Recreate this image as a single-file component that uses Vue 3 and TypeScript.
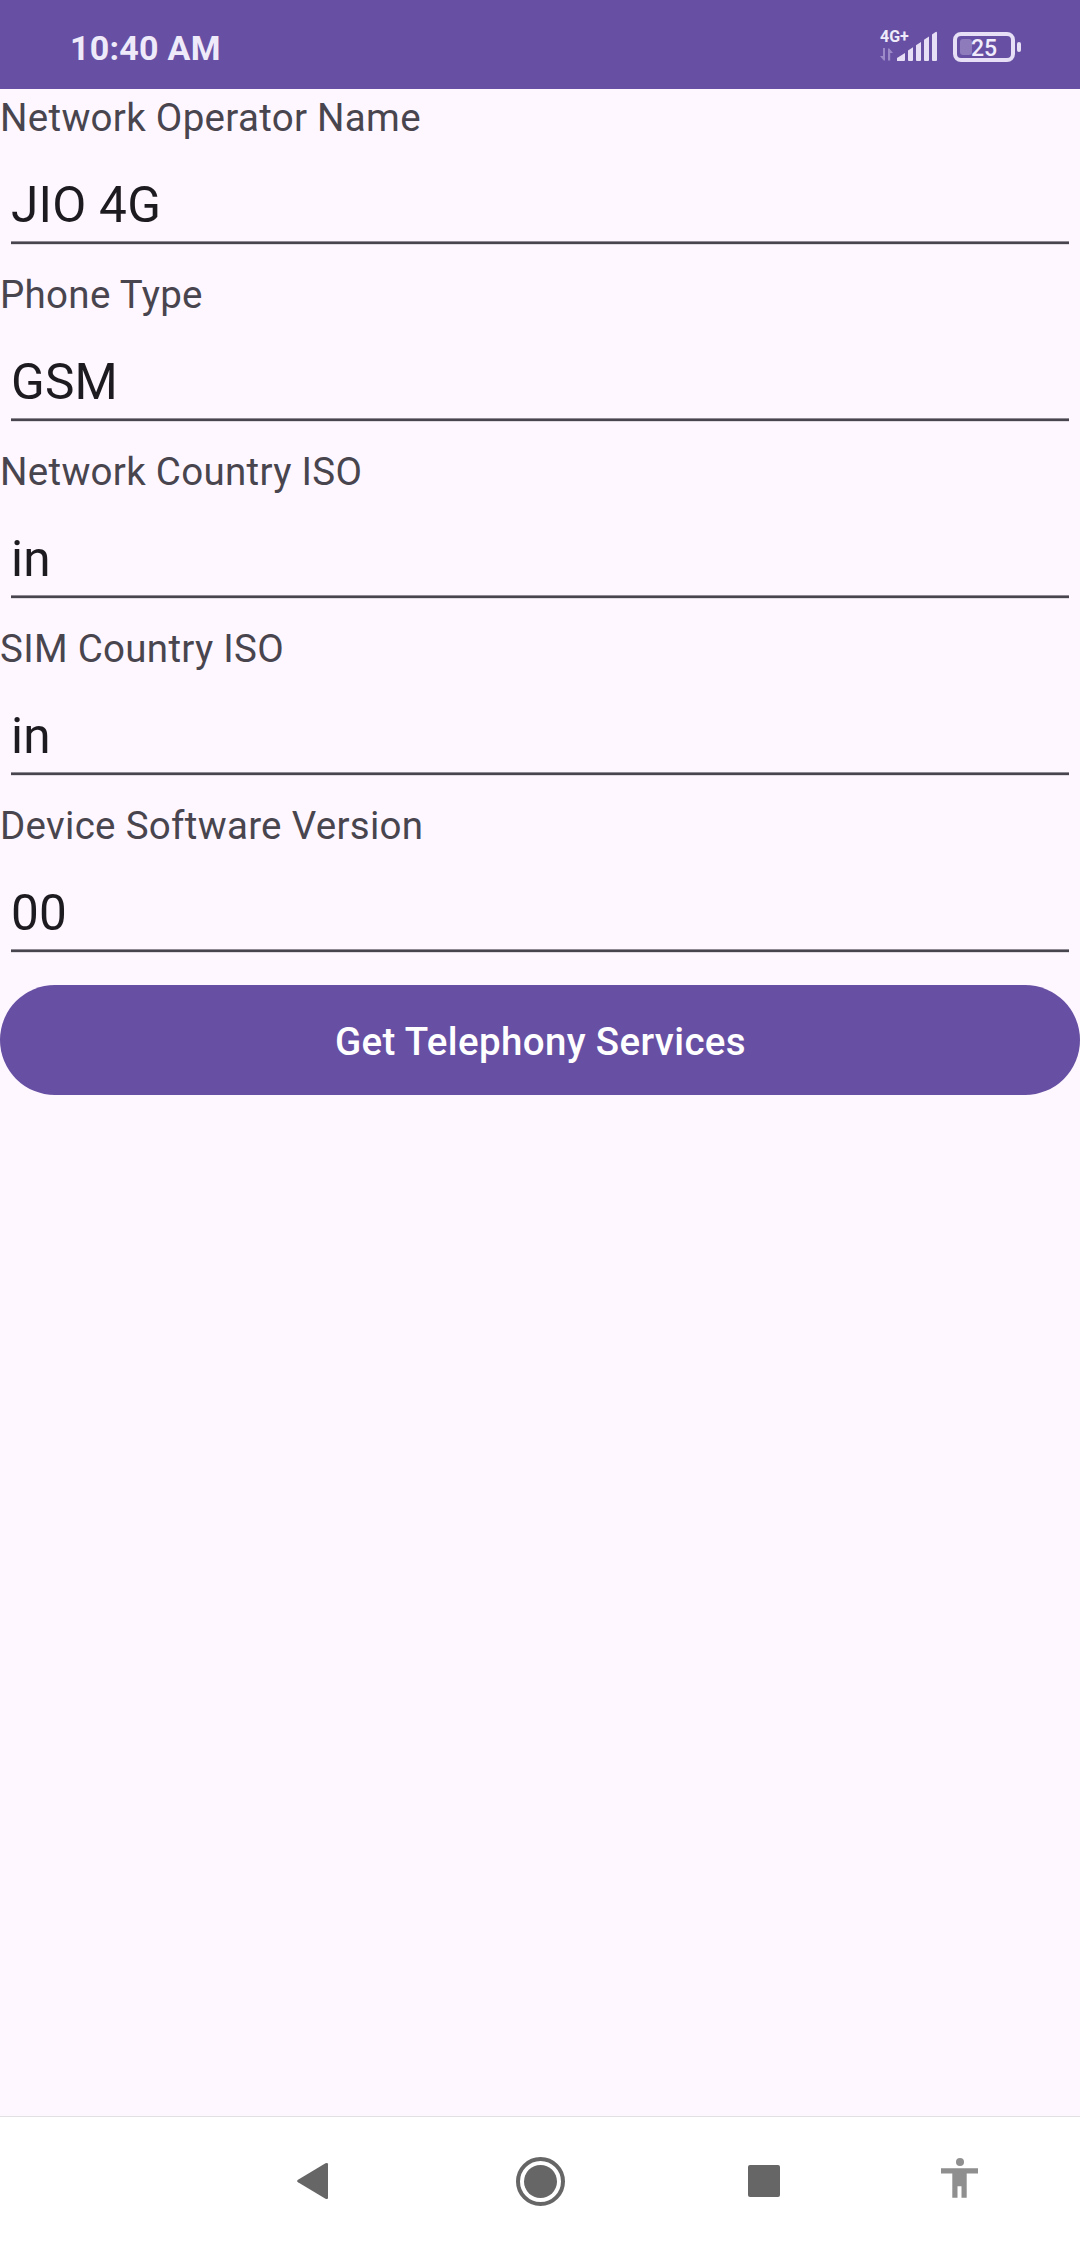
<script setup lang="ts">
interface Field {
  label: string
  value: string
}

const fields: Field[] = [
  { label: 'Network Operator Name', value: 'JIO 4G' },
  { label: 'Phone Type', value: 'GSM' },
  { label: 'Network Country ISO', value: 'in' },
  { label: 'SIM Country ISO', value: 'in' },
  { label: 'Device Software Version', value: '00' },
]
</script>

<template>
  <div class="screen">
    <header class="status-bar">
      <span class="clock">10:40 AM</span>
      <div class="indicators">
        <div class="signal">
          <span class="network">4G+</span>
          <svg class="bars" width="58" height="31" viewBox="0 0 58 31">
            <g fill="#9c8ac8">
              <path d="M3 18h2v12.500h-1.200L0 26h3z" />
              <path d="M8 30.500V18.500h1.300L13 23h-2.800v7.500z" />
            </g>
            <g fill="#e6dff5">
              <path d="M17 31v-3l8-5v7q0 1-1 1h-6z" />
              <path d="M28 20.500l5-3.200V30q0 1-1 1h-3q-1 0-1-1z" />
              <path d="M36 15.200l5-3.200V30q0 1-1 1h-3q-1 0-1-1z" />
              <path d="M44 9.700l5-3.200V30q0 1-1 1h-3q-1 0-1-1z" />
              <path d="M52 4.500l3.600-2.600Q57 1.500 57 3V30q0 1-1 1h-3q-1 0-1-1z" />
            </g>
          </svg>
        </div>
        <div class="battery">
          <div class="battery-body">
            <span class="battery-level"></span>
            <span class="battery-text">25</span>
          </div>
          <span class="battery-tip"></span>
        </div>
      </div>
    </header>

    <main class="content">
      <section v-for="field in fields" :key="field.label" class="field">
        <div class="label">{{ field.label }}</div>
        <div class="value">{{ field.value }}</div>
      </section>
      <button class="action" type="button">Get Telephony Services</button>
    </main>

    <nav class="nav-bar">
      <svg class="back" width="32" height="38" viewBox="0 0 32 38">
        <path d="M1 17.700 28.500 1.300q2.500-1 2.500 1v33.400q0 2-2.500 1L1 20.300Q-.8 19 1 17.700z" fill="#666" />
      </svg>
      <svg class="home" width="50" height="50" viewBox="0 0 50 50">
        <circle cx="24.500" cy="24.500" r="22.500" fill="none" stroke="#666" stroke-width="4" />
        <circle cx="24.500" cy="24.500" r="16.500" fill="#666" />
      </svg>
      <svg class="recents" width="32" height="32" viewBox="0 0 32 32">
        <rect width="32" height="32" rx="2" fill="#666" />
      </svg>
      <svg class="accessibility" width="38" height="41" viewBox="0 0 38 41">
        <circle cx="19" cy="4" r="4" fill="#8f8f8f" />
        <path d="M0 10.200h37v5.200H25.700v24.400h-5.200V28.200h-4v11.600h-5.200V15.400H0z" fill="#8f8f8f" />
      </svg>
    </nav>
  </div>
</template>

<style>
body {
  margin: 0;
}
</style>

<style scoped>
.screen {
  display: flex;
  flex-direction: column;
  width: 1080px;
  height: 2246px;
  overflow: hidden;
  background: #fef7ff;
  font-family: Roboto, 'Liberation Sans', sans-serif;
}

.status-bar {
  display: flex;
  flex: none;
  justify-content: space-between;
  box-sizing: border-box;
  height: 89px;
  padding: 0 59px 0 70px;
  background: #6750a3;
}

.clock {
  margin-top: 28px;
  color: #efeafa;
  font-size: 34px;
  font-weight: 700;
  line-height: 40px;
  letter-spacing: 0.25px;
}

.indicators {
  display: flex;
  gap: 15px;
  padding-top: 30px;
}

.signal {
  position: relative;
  width: 58px;
  height: 31px;
}

.bars {
  display: block;
}

.network {
  position: absolute;
  top: -2px;
  left: 0;
  color: #efeafa;
  font-size: 16px;
  font-weight: 700;
  line-height: 18px;
}

.battery {
  display: flex;
  align-items: center;
  gap: 2px;
  height: 30px;
  margin-top: 2px;
}

.battery-body {
  position: relative;
  box-sizing: border-box;
  width: 62px;
  height: 30px;
  border: 4px solid #e6dff5;
  border-radius: 8px;
}

.battery-level {
  position: absolute;
  top: 3px;
  left: 3px;
  width: 12px;
  height: 16px;
  border-radius: 3px;
  background: #8d7bbc;
}

.battery-text {
  position: absolute;
  top: 1px;
  left: 14px;
  color: #f1ecfb;
  font-size: 23px;
  font-weight: 500;
  line-height: 23px;
}

.battery-tip {
  width: 4px;
  height: 10px;
  border-radius: 2px;
  background: #e6dff5;
}

.content {
  flex: 1;
}

.field {
  box-sizing: border-box;
  height: 177px;
  padding-top: 6px;
}

.label {
  color: #49454e;
  font-size: 38.5px;
  line-height: 45px;
  letter-spacing: 0.3px;
}

/* The underline is 2.75px thick, so its outer rows are partly covered. */
.value {
  height: 69px;
  margin: 36px 11px 0;
  background: linear-gradient(#8f8b94 1px, #49454e 1px, #49454e 3px, #e0dae3 3px) 0 65px / 100% 4px no-repeat;
  color: #1d1b20;
  font-size: 49.5px;
  line-height: 58px;
  letter-spacing: 0.25px;
}

.action {
  display: block;
  width: 100%;
  height: 110px;
  margin: 11px 0 0;
  padding: 2px 0 0 1px;
  border: 0;
  border-radius: 55px;
  background: #6750a3;
  color: #fff;
  font-family: inherit;
  font-size: 38.5px;
  font-weight: 500;
  line-height: 45px;
  letter-spacing: 0.36px;
}

.nav-bar {
  display: flex;
  flex: none;
  align-items: flex-start;
  box-sizing: border-box;
  height: 130px;
  padding-left: 297px;
  border-top: 1px solid #e2e0e3;
  background: #fff;
}

.back {
  margin-top: 45px;
}

.home {
  margin: 40px 0 0 187px;
}

.recents {
  margin: 48px 0 0 182px;
}

.accessibility {
  margin: 41px 0 0 161px;
}
</style>
